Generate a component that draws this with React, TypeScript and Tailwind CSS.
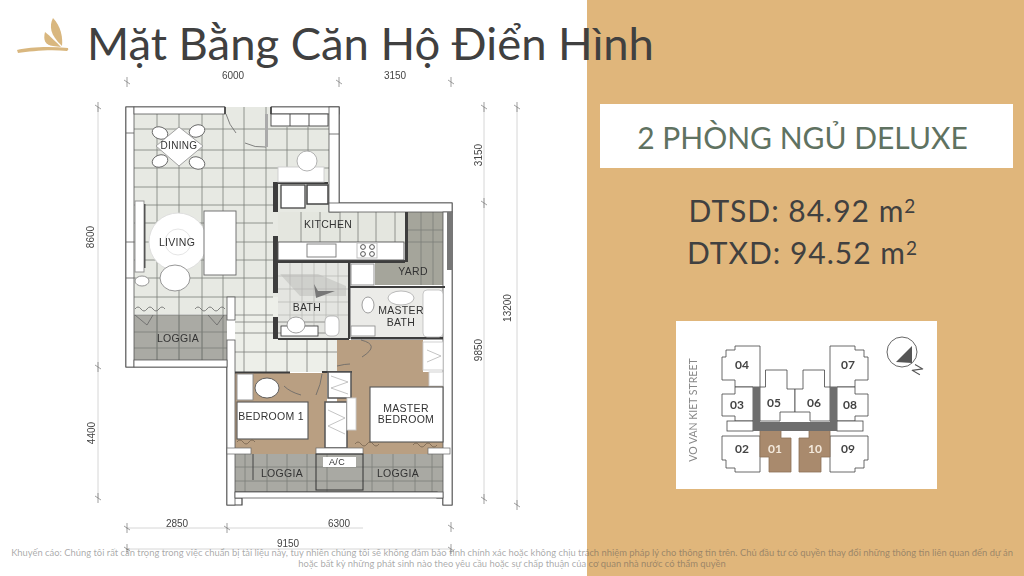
const vGrid = [157, 179, 202, 223, 244, 266, 287, 308]
const hGrid = [129, 150, 168, 187, 205, 223, 242, 260, 278, 297, 315]
const kitchenV = [301, 320, 340, 358, 376, 395]
const loggiaV = [157, 179, 202, 245, 267, 287, 307, 327, 372, 393, 415, 432]

function Tick({ x, y }: { x: number; y: number }) {
  return <path d={`M${x - 3} ${y - 2}L${x + 3} ${y + 2}M${x} ${y - 5}L${x} ${y + 5}`} stroke="#777" strokeWidth="0.7" />
}

function Dim({ x, y, children, vertical }: { x: number; y: number; children: string; vertical?: boolean }) {
  return (
    <text
      x={x}
      y={y}
      transform={vertical ? `rotate(-90 ${x} ${y})` : undefined}
      textAnchor="middle"
      fontFamily="Liberation Sans, sans-serif"
      fontSize="10"
      fill="#444"
    >
      {children}
    </text>
  )
}

function Room({ x, y, children, size = 10.5 }: { x: number; y: number; children: string; size?: number }) {
  return (
    <text x={x} y={y} textAnchor="middle" fontFamily="Liberation Sans, sans-serif" fontSize={size} fill="#333" letterSpacing="0.3">
      {children}
    </text>
  )
}

function FloorPlan() {
  return (
    <svg viewBox="0 70 587 506" className="block w-[587px] h-[506px] blur-[0.4px]">
      {/* dimension lines */}
      <g stroke="#ccc" strokeWidth="0.8" fill="none">
        <path d="M98 107V498M484 107V500M517 107V505M126 528H363M126 549H451" />
      </g>
      <Tick x={127} y={82} />
      <Tick x={339} y={82} />
      <Tick x={451} y={82} />
      <Tick x={98} y={107} />
      <Tick x={98} y={367} />
      <Tick x={98} y={498} />
      <Tick x={484} y={107} />
      <Tick x={484} y={203} />
      <Tick x={484} y={499} />
      <Tick x={517} y={107} />
      <Tick x={517} y={505} />
      <Tick x={127} y={528} />
      <Tick x={227} y={528} />
      <Tick x={451} y={527} />
      <Tick x={127} y={549} />
      <Tick x={451} y={549} />
      <Dim x={233} y={79}>6000</Dim>
      <Dim x={395} y={79}>3150</Dim>
      <Dim x={177} y={527}>2850</Dim>
      <Dim x={339} y={527}>6300</Dim>
      <Dim x={288} y={547}>9150</Dim>
      <Dim x={94} y={237} vertical>8600</Dim>
      <Dim x={95} y={433} vertical>4400</Dim>
      <Dim x={482} y={155} vertical>3150</Dim>
      <Dim x={482} y={350} vertical>9850</Dim>
      <Dim x={511} y={308} vertical>13200</Dim>

      {/* floors */}
      <rect x="134" y="114" width="195" height="200" fill="#e7e9e3" />
      <rect x="225" y="107" width="46" height="7" fill="#e7e9e3" />
      <rect x="235" y="297" width="102" height="75" fill="#edefe9" />
      <rect x="278" y="212" width="130" height="32" fill="#e4e6df" />
      <rect x="134" y="315" width="93" height="45" fill="#aaaaa4" />
      <path d="M408 212H443V285H375V262H408Z" fill="#a5a59b" />
      <rect x="278" y="263" width="70" height="76" fill="#e4e5e1" />
      <path d="M280 274H318L346 286V296H300Z" fill="#cfd0cc" />
      <rect x="351" y="288" width="92" height="50" fill="#ebebe8" />
      <rect x="235" y="373" width="92" height="82" fill="#b99f82" />
      <path d="M337 340H423V372H443V455H337Z" fill="#b99f82" />
      <rect x="235" y="454" width="208" height="38" fill="#a9a9a3" />

      {/* tile lines */}
      <g stroke="#7c7f7a" strokeWidth="0.8">
        {vGrid.map((x) => (
          <line key={x} x1={x} x2={x} y1={x > 270 ? 127 : x === 244 || x === 266 ? 107 : 114} y2={x < 235 ? 360 : x < 275 ? 372 : 182} />
        ))}
        {hGrid.map((y) => (
          <line key={y} x1={134} x2={y > 180 ? 273 : 329} y1={y} y2={y} />
        ))}
        {[322, 333, 352].map((y) => (
          <line key={y} x1={235} x2={337} y1={y} y2={y} />
        ))}
        {kitchenV.map((x) => (
          <line key={x} x1={x} x2={x} y1={212} y2={242} />
        ))}
        {[287, 307, 327].map((x) => (
          <line key={x} x1={x} x2={x} y1={340} y2={372} />
        ))}
        <line x1={134} x2={227} y1={332} y2={332} />
        <line x1={134} x2={227} y1={348} y2={348} />
        <line x1={235} x2={443} y1={467} y2={467} />
        <line x1={235} x2={443} y1={481} y2={481} />
        {loggiaV.map((x) => (
          <line key={x} x1={x} x2={x} y1={x < 227 ? 315 : 454} y2={x < 227 ? 360 : 492} />
        ))}
        <line x1={408} x2={443} y1={230} y2={230} />
        <line x1={408} x2={443} y1={242} y2={242} />
        <line x1={421} x2={421} y1={212} y2={285} />
        <line x1={433} x2={433} y1={212} y2={285} />
      </g>
      <g stroke="#b4b5b1" strokeWidth="0.7">
        {[290, 302, 314, 326, 338].map((x) => (
          <line key={x} x1={x} x2={x} y1={263} y2={326} />
        ))}
        {[276, 289, 302, 315].map((y) => (
          <line key={y} x1={278} x2={348} y1={y} y2={y} />
        ))}
      </g>

      {/* walls, drawn as white bands with dark edges */}
      <path
        d="M126 114V367H227V505H242V498H235V492H437V498H443V505H452V203H339V107H271M225 107H126V114"
        fill="none"
        stroke="#444"
        strokeWidth="1.2"
      />
      <g fill="#fff" stroke="#555" strokeWidth="0.8">
        <rect x="126" y="107" width="8" height="260" />
        <rect x="134" y="107" width="91" height="7" />
        <rect x="271" y="107" width="68" height="7" />
        <rect x="329" y="107" width="10" height="105" />
        <rect x="329" y="203" width="123" height="9" />
        <rect x="443" y="212" width="9" height="293" />
        <rect x="227" y="297" width="8" height="23" />
        <rect x="227" y="340" width="8" height="165" />
        <rect x="134" y="360" width="93" height="7" />
        <rect x="235" y="492" width="208" height="6" />
        <path d="M126 133H134M126 242H134M126 278H134" fill="none" />
        <path d="M329 134H339" fill="none" />
      </g>
      <rect x="447" y="212" width="5" height="58" fill="#777" />
      <path d="M225 107V114M271 107V114" stroke="#333" strokeWidth="1.5" />

      {/* door swings and dark partitions */}
      <g fill="none" stroke="#666" strokeWidth="0.8">
        <path d="M226 114Q229 125 236 133M245 143Q255 148 266 147M322 374Q321 384 316 395M301 395Q290 392 284 386" />
        <path d="M361 340Q381 345 362 357M337 366Q345 364 350 364" />
      </g>
      <rect x="265" y="114" width="3" height="33" fill="#aaa" />
      <g fill="#3d3d3d">
        <rect x="273" y="182" width="5" height="30" />
        <rect x="278" y="182" width="50" height="2" />
        <rect x="273" y="236" width="5" height="57" />
        <rect x="273" y="317" width="5" height="22" />
        <rect x="278" y="260" width="127" height="3" />
        <rect x="278" y="338" width="71" height="2" />
        <rect x="348" y="263" width="2.5" height="76" />
        <rect x="350" y="286" width="95" height="2" />
        <rect x="351" y="337" width="92" height="2.5" />
        <rect x="235" y="371.5" width="55" height="2" />
        <rect x="322" y="371" width="30" height="2" />
        <rect x="405" y="212" width="3" height="50" />
      </g>

      {/* closet and kitchen */}
      <g fill="#fff" stroke="#444" strokeWidth="0.9">
        <rect x="271" y="114" width="57" height="12" />
        <path d="M290 114V126M309 114V126" fill="none" />
        <rect x="278" y="167" width="46" height="15" stroke="#ccc" />
        <circle cx="307" cy="161" r="10" stroke="#aaa" />
        <rect x="281" y="185" width="24" height="23" strokeWidth="1.3" />
        <rect x="307" y="185" width="21" height="19" strokeWidth="1.5" />
        <rect x="278" y="242" width="126" height="18" stroke="#555" />
        <rect x="307" y="244" width="29" height="13" stroke="#777" />
        <rect x="357" y="243" width="20" height="15" stroke="#bbb" />
        <circle cx="363" cy="247" r="2.4" />
        <circle cx="372" cy="247" r="2.4" />
        <circle cx="363" cy="254" r="2.4" />
        <circle cx="372" cy="254" r="2.4" />
        <rect x="351" y="264" width="23" height="21" stroke="#888" />
      </g>

      {/* dining */}
      <g fill="#fff" stroke="#666" strokeWidth="0.9">
        <ellipse cx="160" cy="133" rx="8" ry="6" transform="rotate(20 160 133)" />
        <ellipse cx="197" cy="131" rx="8" ry="6" transform="rotate(-20 197 131)" />
        <ellipse cx="160" cy="161" rx="8" ry="6" transform="rotate(-20 160 161)" />
        <ellipse cx="197" cy="163" rx="8" ry="6" transform="rotate(20 197 163)" />
        <path d="M179 127L203 146L179 166L156 146Z" stroke="#999" />
      </g>

      {/* living */}
      <g fill="#fff" stroke="#8a8a8a" strokeWidth="0.9">
        <rect x="135" y="201" width="9" height="71" />
        <rect x="144" y="204" width="1.5" height="64" fill="#555" stroke="none" />
        <circle cx="178" cy="242" r="29" stroke="#ddd" />
        <circle cx="178" cy="242" r="13" fill="none" stroke="#e2e2e2" />
        <rect x="204" y="211" width="32" height="64" stroke="#666" />
        <ellipse cx="175" cy="278" rx="15" ry="13" />
        <ellipse cx="142" cy="281" rx="7" ry="5" />
      </g>

      {/* curtains above the loggia */}
      <g fill="none" stroke="#666" strokeWidth="0.8">
        <path d="M135 309q3 -4 6 0t6 0t6 0t6 0t6 0M195 309q3 -4 6 0t6 0t6 0t6 0t6 0" />
        <path d="M135 315L147 325L153 315M208 315L217 325L224 315" />
      </g>

      {/* baths */}
      <g fill="#fff" stroke="#666" strokeWidth="0.8">
        <rect x="281" y="326" width="37" height="10" stroke="#333" />
        <ellipse cx="296" cy="325" rx="9" ry="8" stroke="#888" />
        <rect x="325" y="316" width="14" height="20" rx="5" stroke="#aaa" />
        <rect x="351" y="326" width="24" height="10" stroke="#888" />
        <ellipse cx="368" cy="305" rx="6" ry="8" stroke="#888" />
        <ellipse cx="401" cy="298" rx="13" ry="7" stroke="#aaa" />
        <rect x="423" y="290" width="20" height="47" rx="4" stroke="#bbb" />
      </g>
      <path d="M314 284L318 291L335 291L316 298Z" fill="#777" />

      {/* bedrooms */}
      <g fill="#fff" stroke="#555" strokeWidth="0.9">
        <rect x="237" y="374" width="16" height="26" stroke="#888" />
        <ellipse cx="267" cy="388" rx="12" ry="10" />
        <rect x="237" y="402" width="71" height="37" strokeWidth="1.1" />
        <rect x="328" y="372" width="23" height="26" strokeWidth="1.5" />
        <rect x="325" y="402" width="22" height="46" strokeWidth="1.5" />
        <rect x="347" y="398" width="9" height="32" stroke="#ccc" />
        <rect x="423" y="342" width="20" height="28" stroke="#ccc" />
        <rect x="429" y="372" width="14" height="14" stroke="#ccc" />
        <rect x="370" y="387" width="73" height="55" strokeWidth="1.1" />
      </g>
      <g fill="none" stroke="#aaa" strokeWidth="0.7">
        <path d="M331 376L348 382L331 388L348 394M328 410L345 418L328 426L345 434M427 350L441 356L427 362" />
      </g>
      <g fill="none" stroke="#6b5a48" strokeWidth="0.7">
        <path d="M237 442q3 -4 6 0t6 0t6 0M355 444q3 -4 6 0t6 0t6 0t6 0M413 445q3 -4 6 0t6 0t6 0t6 0" />
      </g>

      {/* ledges and A/C */}
      <g fill="#fff" stroke="#666" strokeWidth="0.7">
        <rect x="227" y="448" width="24" height="6" />
        <rect x="316" y="448" width="47" height="6" />
        <rect x="428" y="448" width="22" height="6" />
        <rect x="323" y="457" width="33" height="10" stroke="none" />
      </g>
      <rect x="316" y="454" width="47" height="36" fill="none" stroke="#333" strokeWidth="1" />
      <path d="M253 454V480" stroke="#444" strokeWidth="1" />

      <Room x={179} y={149} size={10}>DINING</Room>
      <Room x={177} y={246}>LIVING</Room>
      <Room x={328} y={228}>KITCHEN</Room>
      <Room x={413} y={275}>YARD</Room>
      <Room x={307} y={311}>BATH</Room>
      <Room x={401} y={314}>MASTER</Room>
      <Room x={401} y={326}>BATH</Room>
      <Room x={178} y={342}>LOGGIA</Room>
      <Room x={271} y={420}>BEDROOM 1</Room>
      <Room x={406} y={412}>MASTER</Room>
      <Room x={406} y={423}>BEDROOM</Room>
      <Room x={282} y={477}>LOGGIA</Room>
      <Room x={398} y={477}>LOGGIA</Room>
      <Room x={337} y={465} size={9}>A/C</Room>
    </svg>
  )
}

function HalfTower() {
  return (
    <g fill="#fff" stroke="#444" strokeWidth="0.8">
      <path d="M735 346H760V387H735V380H722V357H726V350H735Z" />
      <path d="M735 387H753V421H735V416H722V394H735Z" />
      <path d="M722 436H760V472H735V468H726V460H722Z" />
      <rect x="727" y="421" width="26" height="10" />
      <path d="M765.500 370H787V389H795V412H780V421H760V387H765.500Z" />
      <path d="M760 427H781V438H791V472H769V457H760Z" fill="#a98a6d" stroke="#8d7158" />
      <path d="M753 387H760V422H795V431H753Z" fill="#6e6e6e" stroke="none" />
    </g>
  )
}

function KeyPlan() {
  const label = { textAnchor: "middle" as const, fontFamily: "Lato, sans-serif", fontWeight: 700, fontSize: 12 }
  return (
    <svg viewBox="676 321 261 168" className="block w-[261px] h-[168px] blur-[0.3px]">
      <HalfTower />
      <g transform="translate(1590 0) scale(-1 1)">
        <HalfTower />
      </g>
      {[
        ["04", 742, 369],
        ["03", 737, 409],
        ["02", 742, 453],
        ["05", 774, 407],
        ["06", 814, 407],
        ["07", 848, 369],
        ["08", 850, 409],
        ["09", 848, 453],
      ].map(([text, x, y]) => (
        <text key={text} x={x} y={y} fill="#444" {...label}>
          {text}
        </text>
      ))}
      <text x={775} y={453} fill="#f3e9dc" {...label}>01</text>
      <text x={815} y={453} fill="#f3e9dc" {...label}>10</text>
      <text
        x={697}
        y={410}
        transform="rotate(-90 697 410)"
        textAnchor="middle"
        fontFamily="Lato, sans-serif"
        fontSize="10.5"
        fill="#888"
      >
        VO VAN KIET STREET
      </text>
      <circle cx="902" cy="352" r="15" fill="#fff" stroke="#555" strokeWidth="0.9" />
      <path d="M912 346V363L896 362Z" fill="#555" />
      <text x={918} y={374} transform="rotate(-60 918 370)" textAnchor="middle" fontFamily="Lato, sans-serif" fontSize="13" fill="#555">
        N
      </text>
    </svg>
  )
}

export default function App() {
  return (
    <div className="relative flex w-[1024px] h-[576px] overflow-hidden bg-white font-['Lato',sans-serif]">
      <div className="flex flex-col w-[587px] shrink-0">
        <header className="relative z-10 flex items-start h-[70px] pl-[17px] gap-[18px] whitespace-nowrap">
          <svg viewBox="0 0 52 36" className="w-[52px] h-[36px] mt-[18px] shrink-0">
            <path d="M0 32C12 29 32 28 51 30Q52 32 50 33C34 31 14 33 1 35Z" fill="#d9b77f" />
            <path d="M36 0C32 8 33 17 45 28C46 20 44 8 36 0Z" fill="#d9b77f" />
            <path d="M28 14C26 22 28 27 36 28L44 29C39 24 33 18 28 14Z" fill="#d9b77f" />
          </svg>
          <h1 className="mt-[20px] text-[45.4px] font-normal text-[#404040] leading-none">Mặt Bằng Căn Hộ Điển Hình</h1>
        </header>
        <FloorPlan />
      </div>

      <div className="flex-1 flex flex-col items-center pl-[2px] bg-[#e0b67b]">
        <div className="flex items-center justify-center w-[413px] h-[64px] pr-[8px] pt-[2px] mt-[104px] bg-white text-[30px] text-[#5f7261]">
          2 PHÒNG NGỦ DELUXE
        </div>
        <div className="mt-[21px] mr-[8px] text-[30px] leading-[42px] tracking-[1px] text-center text-[#404040]">
          <p>
            DTSD: 84.92 m<sup className="text-[19px]">2</sup>
          </p>
          <p>
            DTXD: 94.52 m<sup className="text-[19px]">2</sup>
          </p>
        </div>
        <div className="mt-[48px] bg-white">
          <KeyPlan />
        </div>
      </div>

      <p className="absolute z-20 left-0 right-0 bottom-[7px] text-[9.39px] leading-[11px] text-center text-[#555]/50">
        Khuyến cáo: Chúng tôi rất cẩn trọng trong việc chuẩn bị tài liệu này, tuy nhiên chúng tôi sẽ không đảm bảo tính chính xác hoặc không chịu trách nhiệm pháp lý cho thông tin trên. Chủ đầu tư có quyền thay đổi những thông tin liên quan đến dự án
        <br />
        hoặc bất kỳ những phát sinh nào theo yêu cầu hoặc sự chấp thuận của cơ quan nhà nước có thẩm quyền
      </p>
    </div>
  )
}
